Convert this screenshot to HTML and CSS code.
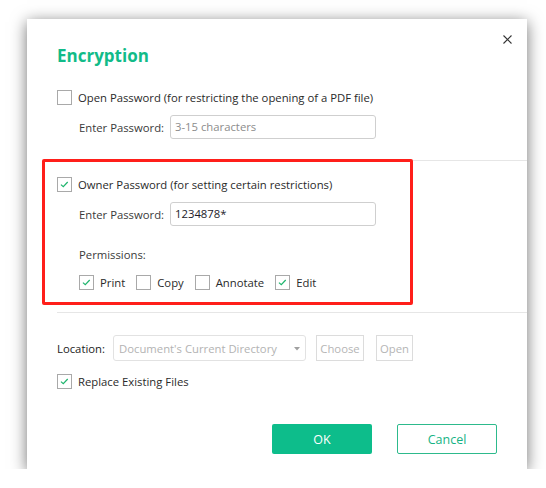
FILE: index.html
```html
<!DOCTYPE html>
<html>
<head>
<meta charset="utf-8">
<link rel="stylesheet" href="styles.css">
</head>
<body>
<div class="stage">
  <div class="dialog">
    <div class="topbar">
      <button class="close" aria-label="Close">
        <svg width="9" height="9" viewBox="0 0 9 9"><path d="M0.5 0.5 L8.5 8.5 M8.5 0.5 L0.5 8.5" stroke="#333" stroke-width="1.1" fill="none"/></svg>
      </button>
    </div>
    <h1 class="title">Encryption</h1>

    <div class="section">
      <label class="check-row first">
        <span class="box"></span>
        <span class="check-text">Open Password (for restricting the opening of a PDF file)</span>
      </label>
      <div class="field-row">
        <span class="field-label">Enter Password:</span>
        <div class="input placeholder">3-15 characters</div>
      </div>
    </div>

    <div class="sep sep-one"></div>

    <div class="section">
      <label class="check-row owner">
        <span class="box checked"><svg viewBox="0 0 15 15"><path d="M3.4 7.6 L6.1 10.1 L11.2 4.6" stroke="#1fb56e" stroke-width="1.4" fill="none"/></svg></span>
        <span class="check-text">Owner Password (for setting certain restrictions)</span>
      </label>
      <div class="field-row">
        <span class="field-label">Enter Password:</span>
        <div class="input value">1234878*</div>
      </div>
      <div class="perm-label">Permissions:</div>
      <div class="perm-row">
        <label class="perm"><span class="box checked"><svg viewBox="0 0 15 15"><path d="M3.4 7.6 L6.1 10.1 L11.2 4.6" stroke="#1fb56e" stroke-width="1.4" fill="none"/></svg></span><span>Print</span></label>
        <label class="perm"><span class="box"></span><span>Copy</span></label>
        <label class="perm"><span class="box"></span><span>Annotate</span></label>
        <label class="perm"><span class="box checked"><svg viewBox="0 0 15 15"><path d="M3.4 7.6 L6.1 10.1 L11.2 4.6" stroke="#1fb56e" stroke-width="1.4" fill="none"/></svg></span><span>Edit</span></label>
      </div>
    </div>

    <div class="sep sep-two"></div>

    <div class="section">
      <div class="location-row">
        <span class="loc-label">Location:</span>
        <div class="select">
          <span>Document's Current Directory</span>
          <svg class="caret" width="6" height="4" viewBox="0 0 6 4"><path d="M0 0 L6 0 L3 3.5 Z" fill="#a0a0a0"/></svg>
        </div>
        <button class="mini choose">Choose</button>
        <button class="mini open">Open</button>
      </div>
      <label class="check-row replace">
        <span class="box checked"><svg viewBox="0 0 15 15"><path d="M3.4 7.6 L6.1 10.1 L11.2 4.6" stroke="#1fb56e" stroke-width="1.4" fill="none"/></svg></span>
        <span class="check-text">Replace Existing Files</span>
      </label>
    </div>

    <div class="footer">
      <button class="btn ok">OK</button>
      <button class="btn cancel">Cancel</button>
    </div>

    <div class="highlight"></div>
  </div>
</div>
</body>
</html>
```
FILE: styles.css
```css
* { box-sizing: border-box; }
html, body { margin: 0; padding: 0; background: #fff; }
body {
  font-family: "Open Sans", "Noto Sans", sans-serif;
  font-size: 11.3px;
  color: #333;
}
.stage { padding: 19px 0 0 27px; }
.dialog {
  position: relative;
  width: 500px;
  height: 450px;
  background: #fff;
  box-shadow: 0 3px 15px rgba(0,0,0,0.55);
}
.topbar {
  display: flex;
  justify-content: flex-end;
  padding: 15px 14px 0 0;
  height: 26px;
}
.close {
  width: 11px; height: 11px;
  padding: 1px;
  border: 0; background: none;
  display: flex; align-items: center; justify-content: center;
}
.title {
  margin: -1px 0 0 30px;
  font-size: 17px;
  line-height: 24px;
  font-weight: 700;
  color: #12bb88;
}
.section { padding-left: 30px; }
.check-row {
  display: flex;
  align-items: center;
  height: 20px;
  gap: 6px;
  color: #2a2a2a;
}
.check-row.first { margin-top: 19px; }
.check-row.owner { margin-top: 13px; }
.check-row.replace { margin-top: 10px; }
.box {
  width: 15px; height: 15px;
  border: 1px solid #a9a9a9;
  background: #fff;
  flex: none;
  display: flex;
}
.box svg { width: 13px; height: 13px; }
.field-row {
  display: flex;
  align-items: center;
  margin-top: 8px;
  padding-left: 22px;
}
.field-label {
  width: 91px;
  color: #3a3a3a;
}
.input {
  width: 206px;
  height: 24px;
  border: 1px solid #cfcfcf;
  border-radius: 3px;
  padding: 0 4px;
  line-height: 22px;
}
.input.placeholder { color: #8c8c8c; }
.input.value { color: #1c1a2a; }
.sep {
  height: 1px;
  background: #e6e6e6;
  margin-left: 30px;
}
.sep-one { margin-top: 21px; }
.sep-two { margin-top: 20px; }
.perm-label {
  margin-top: 19px;
  padding-left: 22px;
  line-height: 20px;
  color: #3a3a3a;
}
.perm-row {
  display: flex;
  align-items: center;
  gap: 11px;
  height: 20px;
  margin-top: 7px;
  padding-left: 22px;
}
.perm {
  display: flex;
  align-items: center;
  gap: 6px;
  color: #2a2a2a;
}
.location-row {
  display: flex;
  align-items: center;
  margin-top: 22px;
  height: 26px;
}
.loc-label { width: 56px; color: #222; }
.select {
  width: 193px;
  height: 26px;
  border: 1px solid #e2e2e2;
  border-radius: 3px;
  display: flex;
  align-items: center;
  justify-content: space-between;
  padding: 0 5px 0 5px;
  color: #b3b3b3;
}
.caret { margin-top: 1px; }
.mini {
  height: 26px;
  border: 1px solid #dcdcdc;
  background: #fff;
  color: #b5b5b5;
  font: inherit;
  padding: 0;
  border-radius: 0;
}
.choose { width: 48px; margin-left: 10px; }
.open { width: 37px; margin-left: 12px; }
.footer {
  display: flex;
  justify-content: flex-end;
  gap: 25px;
  margin-top: 33px;
  padding-right: 30px;
}
.btn {
  width: 100px;
  height: 30px;
  font-family: inherit;
  font-size: 12.5px;
  border-radius: 2px;
}
.ok {
  background: #0dbd8b;
  border: 0;
  color: #fff;
}
.cancel {
  background: #fff;
  border: 1px solid #2dba8c;
  color: #16b384;
}
.highlight {
  position: absolute;
  left: 15px;
  top: 140px;
  width: 371px;
  height: 146px;
  border: 3px solid #ff1f1a;
  border-radius: 2px;
  pointer-events: none;
}
```
